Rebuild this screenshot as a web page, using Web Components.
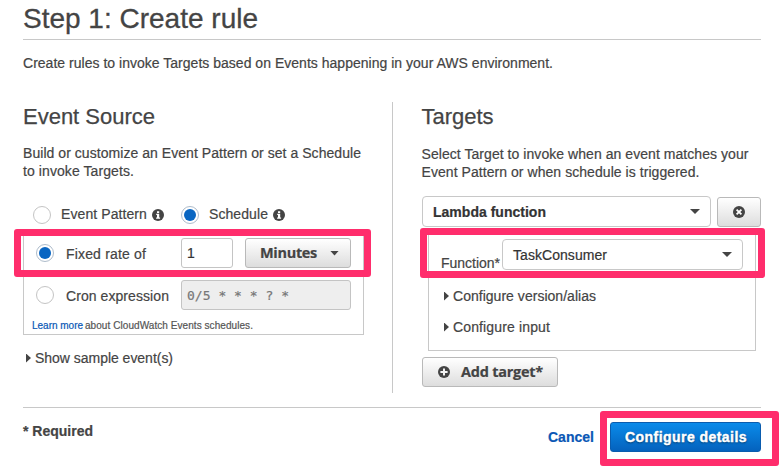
<!DOCTYPE html>
<html lang="en">
<head>
<meta charset="utf-8">
<title>Create rule</title>
<style>
html,body{margin:0;background:#fff}
body{width:780px;height:466px;overflow:hidden;font-family:"Liberation Sans",Arial,sans-serif;color:#444}
</style>
</head>
<body>
<rule-page></rule-page>
<script>
const define = (name, html, setup) => customElements.define(name, class extends HTMLElement {
  connectedCallback() {
    if (this.shadowRoot) return;
    const t = document.createElement('template');
    t.innerHTML = html;
    this.attachShadow({ mode: 'open' }).appendChild(t.content.cloneNode(true));
    if (setup) setup(this, this.shadowRoot);
  }
});

// One line of text; "w" gives the advance width that the line is tracked to.
define('ui-text', `<style>
:host{display:block;font-size:14px;line-height:18px;white-space:nowrap;-webkit-text-stroke:.2px currentColor}
span{display:inline-block}
</style><span><slot></slot></span>`, (el, root) => {
  const w = +el.getAttribute('w');
  if (!w) return;
  const span = root.querySelector('span');
  const n = el.textContent.length;
  span.style.letterSpacing = ((w - span.getBoundingClientRect().width) / n) + 'px';
});

define('ui-radio', `<style>
:host{display:block;flex:none;box-sizing:border-box;width:18px;height:18px;border:1px solid #c4c4c4;border-radius:50%;background:#fff;padding:2px}
:host([checked]){border-color:#aebccb}
i{display:none;width:12px;height:12px;border-radius:50%;background:#0a66c2}
:host([checked]) i{display:block}
</style><i></i>`);

const glyphs = {
  info: '<circle cx="6" cy="6" r="6" fill="#444"/><path d="M4.2 4.8h3v3.6h.9v1.3H4.1V8.4h.9V6.1h-.8zM5 2.2h2.2v1.7H5z" fill="#fff"/>',
  close: '<circle cx="6" cy="6" r="6" fill="#444"/><path d="M3.6 3.6l4.8 4.8M8.4 3.6l-4.8 4.8" stroke="#fff" stroke-width="1.8"/>',
  plus: '<circle cx="6" cy="6" r="6" fill="#444"/><path d="M6 2.4v7.2M2.4 6h7.2" stroke="#f4f4f4" stroke-width="2"/>'
};
define('ui-icon', `<style>:host{display:block;flex:none;width:12px;height:12px}svg{display:block}</style><svg width="12" height="12" viewBox="0 0 12 12"></svg>`,
  (el, root) => { root.querySelector('svg').innerHTML = glyphs[el.getAttribute('name')]; });

define('ui-caret', `<style>:host{display:block;flex:none;width:10px;height:5px}
:host([small]){width:9px}
:host([right]){width:5px;height:9px}
i{display:block;width:100%;height:100%;background:#444;clip-path:polygon(0 0,100% 0,50% 100%)}
:host([right]) i{clip-path:polygon(0 0,100% 50%,0 100%)}
</style><i></i>`);

define('ui-button', `<style>
:host{display:flex;flex:none;align-items:center;box-sizing:border-box;height:30px;border:1px solid #b9b9b9;border-radius:3px;background:linear-gradient(#fff,#ddd);font-family:"Open Sans","Noto Sans",sans-serif;font-weight:700;color:#444}
:host([primary]){background:linear-gradient(#0a8bea,#0462bd);border-color:#0a5cae;color:#fff;text-shadow:0 1px 2px rgba(0,0,0,.5);font-family:"Liberation Sans",Arial,sans-serif}
</style><slot></slot>`);

define('ui-field', `<style>
:host{display:flex;flex:none;align-items:center;box-sizing:border-box;height:30px;border:1px solid #c4c4c4;border-radius:3px;background:#fff;color:#333;padding-left:5px}
:host([disabled]){background:#eee;color:#777;font-family:"DejaVu Sans Mono",monospace}
</style><slot></slot>`);

define('ui-select', `<style>
:host{display:flex;flex:none;align-items:center;justify-content:space-between;box-sizing:border-box;height:31px;border:1px solid #c8c8c8;border-radius:4px;background:#fff;color:#333;padding:0 10px}
</style><slot></slot><ui-caret></ui-caret>`);

define('ui-expander', `<style>
:host{display:flex;align-items:center;gap:4px;height:18px}
</style><ui-caret right></ui-caret><slot></slot>`);

// Annotation frame laid over the form.
define('mark-frame', `<style>
:host{display:block;position:absolute;box-sizing:border-box;border:7px solid #ff2d6c;border-radius:3px}
</style>`);

define('event-source', `<style>
:host{display:block;box-sizing:border-box;width:370px;height:291px;border-right:1px solid #c8c8c8;padding-top:2px}
.h{font-size:22px;line-height:26px;-webkit-text-stroke-width:.25px}
.desc{margin-top:14px}
.choice{display:flex;align-items:center;height:20px;margin:25px 0 0 10px}
.choice ui-text{height:20px}
.box{box-sizing:border-box;width:341px;height:103px;margin-top:7px;border:1px solid #c8c8c8;padding:5px 0 0 12px}
.row{display:flex;align-items:center;height:30px;gap:12px}
.row+.row{margin-top:12px}
.row>.lab{width:103px;padding-top:1px}
.learn{display:flex;gap:2px;margin:9px 0 0 -4px}
.learn ui-text{font-size:10px;line-height:14px;color:#555}
.learn .a{color:#0a57b5}
ui-expander{margin:14px 0 0 3px}
</style>
<ui-text class="h" w="132">Event Source</ui-text>
<div class="desc"><ui-text w="338">Build or customize an Event Pattern or set a Schedule</ui-text><ui-text w="111">to invoke Targets.</ui-text></div>
<div class="choice"><ui-radio></ui-radio><ui-text w="86" style="margin:0 5px 0 10px">Event Pattern</ui-text><ui-icon name="info"></ui-icon>
<ui-radio checked style="margin-left:17px"></ui-radio><ui-text w="59" style="margin:0 5px 0 10px">Schedule</ui-text><ui-icon name="info"></ui-icon></div>
<div class="box">
<div class="row"><ui-radio checked></ui-radio><ui-text class="lab" w="80">Fixed rate of</ui-text><ui-field style="width:52px"><ui-text>1</ui-text></ui-field>
<ui-button style="width:106px;padding-left:14px"><ui-text w="57" style="width:70px;font-size:14.5px;padding-bottom:1px">Minutes</ui-text><ui-caret small></ui-caret></ui-button></div>
<div class="row"><ui-radio></ui-radio><ui-text class="lab" w="103">Cron expression</ui-text><ui-field disabled style="width:170px"><ui-text w="102" style="font-size:13px;padding-top:2px">0/5 * * * ? *</ui-text></ui-field></div>
<div class="learn"><ui-text class="a" w="51">Learn more</ui-text><ui-text w="168">about CloudWatch Events schedules.</ui-text></div>
</div>
<ui-expander><ui-text w="138">Show sample event(s)</ui-text></ui-expander>`);

define('rule-targets', `<style>
:host{display:block;padding:2px 0 0 28.5px}
.h{font-size:22px;line-height:26px;-webkit-text-stroke-width:.25px}
.desc{margin-top:15px}
.pick{display:flex;align-items:flex-end;gap:6px;margin:15px 0 0 .5px}
.box{box-sizing:border-box;width:328px;height:123px;margin:1px 0 0 6.5px;border:1px solid #c8c8c8;padding:10px 0 0 12px}
.fn{display:flex;gap:2px}
.fn>ui-text{padding-top:15px;height:16px}
ui-expander{margin:0 0 0 3px}
.add{width:136px;padding-left:15px;margin:6px 0 0 .5px}
</style>
<ui-text class="h" w="72">Targets</ui-text>
<div class="desc"><ui-text w="327">Select Target to invoke when an event matches your</ui-text><ui-text w="278">Event Pattern or when schedule is triggered.</ui-text></div>
<div class="pick"><ui-select style="width:289px"><ui-text w="113" style="font-weight:700">Lambda function</ui-text></ui-select><ui-button style="width:44px;justify-content:center"><ui-icon name="close"></ui-icon></ui-button></div>
<div class="box">
<div class="fn"><ui-text w="59">Function*</ui-text><ui-select style="width:241px"><ui-text w="94">TaskConsumer</ui-text></ui-select></div>
<ui-expander style="margin-top:17px"><ui-text w="143">Configure version/alias</ui-text></ui-expander>
<ui-expander style="margin-top:13px"><ui-text w="97">Configure input</ui-text></ui-expander>
</div>
<ui-button class="add"><ui-icon name="plus"></ui-icon><ui-text w="82" style="font-size:14.5px;margin-left:11px;padding-bottom:1px">Add target*</ui-text></ui-button>`);

define('rule-page', `<style>
:host{display:block;position:relative;width:780px;height:466px;box-sizing:border-box;padding:0 19px 0 23px;overflow:hidden}
.title{box-sizing:border-box;height:40px;padding-top:3px;border-bottom:1px solid #c8c8c8;font-size:28px;line-height:32px;-webkit-text-stroke-width:.3px}
.intro{margin-top:14px}
.cols{display:grid;grid-template-columns:370px 1fr;height:291px;margin-top:30px}
footer{display:flex;align-items:flex-start;margin-top:14px;border-top:1px solid #c8c8c8;padding-top:14px;font-weight:700}
footer .cancel{margin:6px 16px 0 auto;color:#0a57b5}
</style>
<ui-text class="title" w="235">Step 1: Create rule</ui-text>
<ui-text class="intro" w="530">Create rules to invoke Targets based on Events happening in your AWS environment.</ui-text>
<div class="cols"><event-source></event-source><rule-targets></rule-targets></div>
<footer><ui-text w="70">* Required</ui-text><ui-text class="cancel" w="46">Cancel</ui-text><ui-button primary style="width:151px;padding-left:14px"><ui-text w="122" style="-webkit-text-stroke-width:.4px">Configure details</ui-text></ui-button></footer>
<mark-frame style="left:14px;top:229px;width:357px;height:48px"></mark-frame>
<mark-frame style="left:420px;top:228px;width:345px;height:50px"></mark-frame>
<mark-frame style="left:600px;top:411px;width:179px;height:55px"></mark-frame>`);
</script>
</body>
</html>
